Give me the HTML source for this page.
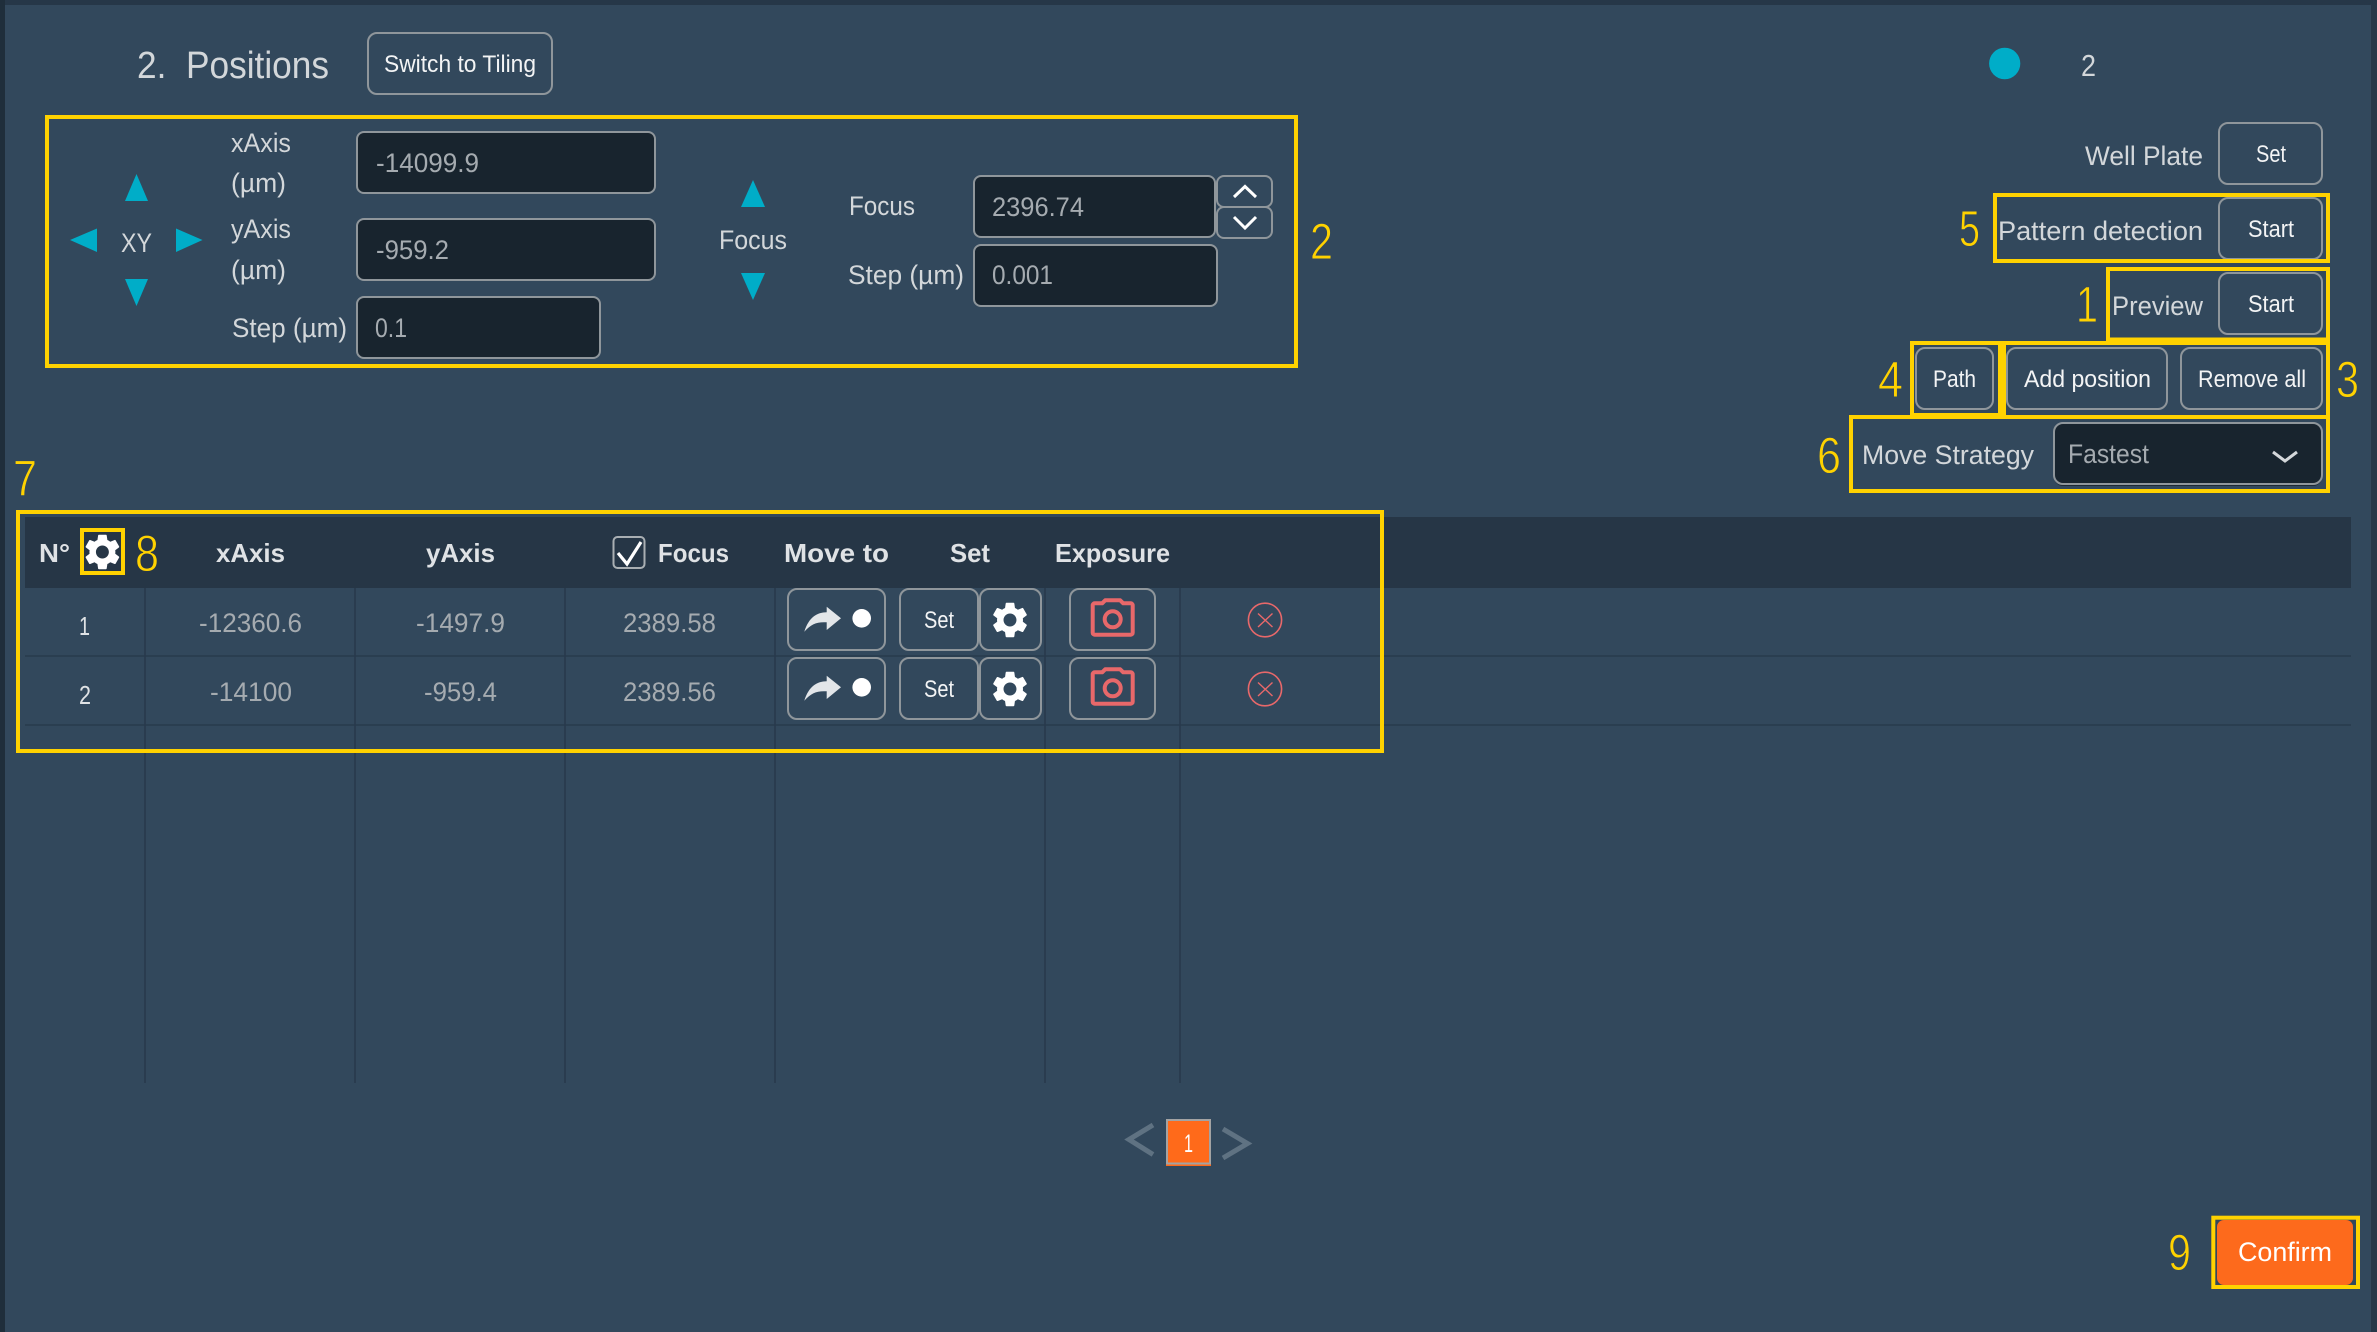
<!DOCTYPE html>
<html lang="en">
<head>
<meta charset="utf-8">
<title>Positions</title>
<style>
html,body{margin:0;padding:0;background:#32485c;width:2377px;height:1332px;overflow:hidden}
svg{display:block}
text{font-family:"Liberation Sans",sans-serif;font-size:27px;fill:#d3d7da;white-space:pre}
.v{fill:#a5abb0}
.b{fill:#f3f4f5;font-size:24px}
.h{font-weight:700;fill:#dfe2e5;font-size:26px}
.y{fill:#ffd200;font-size:51px;stroke:#32485c;stroke-width:.9px}
.box{fill:none;stroke:#ffd200;stroke-width:4}
.btn{fill:#32485c;stroke:#8f969b;stroke-width:2}
.inp{fill:#18242e;stroke:#8f969b;stroke-width:2}
.a{fill:#00adc8}
.cl{stroke:#283a4c;stroke-width:1.6}
.gear{fill:#fff;fill-rule:evenodd}
.cam{fill:none;stroke:#e8686a;stroke-width:4;stroke-linejoin:round}
</style>
</head>
<body>
<svg width="2377" height="1332" viewBox="0 0 2377 1332" xmlns="http://www.w3.org/2000/svg">
<defs>
<path id="g" d="M19.14 12.94c.04-.3.06-.61.06-.94 0-.32-.02-.64-.07-.94l2.03-1.58a.49.49 0 0 0 .12-.61l-1.92-3.32a.488.488 0 0 0-.59-.22l-2.39.96c-.5-.38-1.03-.7-1.62-.94l-.36-2.54a.484.484 0 0 0-.48-.41h-3.84c-.24 0-.43.17-.47.41l-.36 2.54c-.59.24-1.13.57-1.62.94l-2.39-.96c-.22-.08-.47 0-.59.22L2.74 8.87c-.12.21-.08.47.12.61l2.03 1.58c-.05.3-.09.63-.09.94s.02.64.07.94l-2.03 1.58a.49.49 0 0 0-.12.61l1.92 3.32c.12.22.37.29.59.22l2.39-.96c.5.38 1.03.7 1.62.94l.36 2.54c.05.24.24.41.48.41h3.84c.24 0 .44-.17.47-.41l.36-2.54c.59-.24 1.13-.56 1.62-.94l2.39.96c.22.08.47 0 .59-.22l1.92-3.32c.12-.22.07-.47-.12-.61l-2.01-1.58zM12 15.6c-1.98 0-3.6-1.62-3.6-3.6s1.62-3.6 3.6-3.6 3.6 1.62 3.6 3.6-1.62 3.6-3.6 3.6z"/>
</defs>

<!-- window -->
<rect width="2377" height="1332" fill="#32485c"/>
<rect x="0" y="0" width="2377" height="5" fill="#263748"/>
<rect x="0" y="0" width="5" height="1332" fill="#1f2e3b"/>
<rect x="2371" y="0" width="6" height="1332" fill="#263748"/>

<!-- title -->
<text x="137" y="78" style="font-size:38px;fill:#d3d7da" textLength="192" lengthAdjust="spacingAndGlyphs">2.  Positions</text>
<rect class="btn" x="368" y="33" width="184" height="61" rx="9"/>
<text class="b" x="384" y="72" textLength="152" lengthAdjust="spacingAndGlyphs">Switch to Tiling</text>

<!-- XY panel -->
<rect class="box" x="47" y="117" width="1249" height="249"/>
<polygon class="a" points="136.5,174 148,201 125,201"/>
<polygon class="a" points="70,240 97,228.5 97,252"/>
<polygon class="a" points="202.5,240 176,228.5 176,252"/>
<polygon class="a" points="136.5,306 148,279 125,279"/>
<text x="121" y="252" textLength="31" lengthAdjust="spacingAndGlyphs">XY</text>

<text x="231" y="152" textLength="60" lengthAdjust="spacingAndGlyphs">xAxis</text>
<text x="231" y="192" textLength="55" lengthAdjust="spacingAndGlyphs">(µm)</text>
<rect class="inp" x="357" y="132" width="298" height="61" rx="7"/>
<text class="v" x="376" y="172" textLength="103" lengthAdjust="spacingAndGlyphs">-14099.9</text>

<text x="231" y="238" textLength="60" lengthAdjust="spacingAndGlyphs">yAxis</text>
<text x="231" y="279" textLength="55" lengthAdjust="spacingAndGlyphs">(µm)</text>
<rect class="inp" x="357" y="219" width="298" height="61" rx="7"/>
<text class="v" x="376" y="259" textLength="73" lengthAdjust="spacingAndGlyphs">-959.2</text>

<text x="232" y="337" textLength="115" lengthAdjust="spacingAndGlyphs">Step (µm)</text>
<rect class="inp" x="357" y="297" width="243" height="61" rx="7"/>
<text class="v" x="375" y="337" textLength="32" lengthAdjust="spacingAndGlyphs">0.1</text>

<polygon class="a" points="753,180 765,207 741,207"/>
<text x="719" y="249" textLength="68" lengthAdjust="spacingAndGlyphs">Focus</text>
<polygon class="a" points="753,300 765,273 741,273"/>

<text x="849" y="215" textLength="66" lengthAdjust="spacingAndGlyphs">Focus</text>
<rect class="inp" x="974" y="176" width="241" height="61" rx="7"/>
<text class="v" x="992" y="216" textLength="92" lengthAdjust="spacingAndGlyphs">2396.74</text>
<rect class="btn" x="1217" y="176" width="55" height="31" rx="7"/>
<rect class="btn" x="1217" y="207" width="55" height="31" rx="7"/>
<path d="M1234 197L1245 186.5L1256 197" fill="none" stroke="#fff" stroke-width="3"/>
<path d="M1234 217L1245 228L1256 217" fill="none" stroke="#fff" stroke-width="3"/>
<text x="848" y="284" textLength="116" lengthAdjust="spacingAndGlyphs">Step (µm)</text>
<rect class="inp" x="974" y="245" width="243" height="61" rx="7"/>
<text class="v" x="992" y="284" textLength="61" lengthAdjust="spacingAndGlyphs">0.001</text>
<text class="y" x="1310" y="259" textLength="23" lengthAdjust="spacingAndGlyphs">2</text>

<!-- top right -->
<ellipse cx="2004.7" cy="63.5" rx="15.6" ry="15.8" fill="#00adc8"/>
<text x="2081" y="76" style="font-size:31px;fill:#d3d7da" textLength="15" lengthAdjust="spacingAndGlyphs">2</text>

<text x="2085" y="165" textLength="118" lengthAdjust="spacingAndGlyphs">Well Plate</text>
<rect class="btn" x="2219" y="123" width="103" height="61" rx="9"/>
<text class="b" x="2256" y="162" textLength="30" lengthAdjust="spacingAndGlyphs">Set</text>

<text x="1998" y="240" textLength="205" lengthAdjust="spacingAndGlyphs">Pattern detection</text>
<rect class="btn" x="2219" y="198" width="103" height="61" rx="9"/>
<text class="b" x="2248" y="237" textLength="46" lengthAdjust="spacingAndGlyphs">Start</text>

<text x="2112" y="315" textLength="91" lengthAdjust="spacingAndGlyphs">Preview</text>
<rect class="btn" x="2219" y="273" width="103" height="61" rx="9"/>
<text class="b" x="2248" y="312" textLength="46" lengthAdjust="spacingAndGlyphs">Start</text>

<rect class="btn" x="1916" y="348" width="77" height="61" rx="9"/>
<text class="b" x="1933" y="387" textLength="43" lengthAdjust="spacingAndGlyphs">Path</text>
<rect class="btn" x="2007" y="348" width="160" height="61" rx="9"/>
<text class="b" x="2024" y="387" textLength="127" lengthAdjust="spacingAndGlyphs">Add position</text>
<rect class="btn" x="2181" y="348" width="141" height="61" rx="9"/>
<text class="b" x="2198" y="387" textLength="108" lengthAdjust="spacingAndGlyphs">Remove all</text>

<text x="1862" y="464" textLength="172" lengthAdjust="spacingAndGlyphs">Move Strategy</text>
<rect x="2054" y="425" width="268" height="61" rx="9" fill="#1c2935"/>
<rect class="inp" x="2054" y="423" width="268" height="61" rx="9"/>
<text class="v" x="2068" y="463" textLength="81" lengthAdjust="spacingAndGlyphs">Fastest</text>
<path d="M2273 452L2285 461L2297 452" fill="none" stroke="#d3d7da" stroke-width="3"/>

<!-- yellow boxes right -->
<rect class="box" x="1995" y="195" width="333" height="66"/>
<rect class="box" x="2108" y="269" width="220" height="70.5"/>
<rect class="box" x="2004" y="343" width="324" height="74"/>
<rect class="box" x="1912" y="343" width="88" height="72"/>
<rect class="box" x="1851" y="417" width="477" height="74"/>
<text class="y" x="1959" y="246" textLength="21" lengthAdjust="spacingAndGlyphs">5</text>
<text class="y" x="2076" y="322" textLength="22" lengthAdjust="spacingAndGlyphs">1</text>
<text class="y" x="1878" y="397" textLength="25" lengthAdjust="spacingAndGlyphs">4</text>
<text class="y" x="2336" y="397" textLength="23" lengthAdjust="spacingAndGlyphs">3</text>
<text class="y" x="1817" y="473" textLength="24" lengthAdjust="spacingAndGlyphs">6</text>
<text class="y" x="13" y="496" textLength="24" lengthAdjust="spacingAndGlyphs">7</text>

<!-- table -->
<rect x="25" y="517" width="2326" height="71" fill="#263646"/>
<line class="cl" x1="145" y1="588" x2="145" y2="1083"/>
<line class="cl" x1="355" y1="588" x2="355" y2="1083"/>
<line class="cl" x1="565" y1="588" x2="565" y2="1083"/>
<line class="cl" x1="775" y1="588" x2="775" y2="1083"/>
<line class="cl" x1="1045" y1="588" x2="1045" y2="1083"/>
<line class="cl" x1="1180" y1="588" x2="1180" y2="1083"/>
<line class="cl" x1="25" y1="656" x2="2351" y2="656"/>
<line class="cl" x1="25" y1="725" x2="2351" y2="725"/>

<text class="h" x="39" y="562" textLength="31" lengthAdjust="spacingAndGlyphs">N°</text>
<use href="#g" class="gear" transform="translate(80.8 530.4) scale(1.8)"/>
<rect x="82" y="530" width="41" height="43" fill="none" stroke="#ffd200" stroke-width="4"/>
<text class="y" x="135" y="571" style="stroke:#263646;stroke-width:.9px" textLength="24" lengthAdjust="spacingAndGlyphs">8</text>
<text class="h" x="216" y="562" textLength="69" lengthAdjust="spacingAndGlyphs">xAxis</text>
<text class="h" x="426" y="562" textLength="69" lengthAdjust="spacingAndGlyphs">yAxis</text>
<rect x="613.5" y="537" width="31" height="31" rx="4" fill="none" stroke="#a9afb3" stroke-width="2"/>
<path d="M618 553L627 564L641 542" fill="none" stroke="#fff" stroke-width="3.2"/>
<text class="h" x="658" y="562" textLength="71" lengthAdjust="spacingAndGlyphs">Focus</text>
<text class="h" x="784" y="562" textLength="105" lengthAdjust="spacingAndGlyphs">Move to</text>
<text class="h" x="950" y="562" textLength="40" lengthAdjust="spacingAndGlyphs">Set</text>
<text class="h" x="1055" y="562" textLength="115" lengthAdjust="spacingAndGlyphs">Exposure</text>

<!-- row 1 -->
<text x="79" y="635" style="font-size:26px;fill:#dfe2e5" textLength="11" lengthAdjust="spacingAndGlyphs">1</text>
<text class="v" x="199" y="632" textLength="103" lengthAdjust="spacingAndGlyphs">-12360.6</text>
<text class="v" x="416" y="632" textLength="89" lengthAdjust="spacingAndGlyphs">-1497.9</text>
<text class="v" x="623" y="632" textLength="93" lengthAdjust="spacingAndGlyphs">2389.58</text>
<g>
<rect class="btn" x="788" y="589" width="97" height="61" rx="9"/>
<path d="M804.3 631.7C809 617 817 612.5 826.7 612.3V606.7L841 618.3L826.7 630V622.3C817 621.7 811 624 804.3 631.7Z" fill="#e3e6e9"/>
<circle cx="861.7" cy="618.3" r="9.3" fill="#fff"/>
<rect class="btn" x="900" y="589" width="78" height="61" rx="9"/>
<text class="b" x="924" y="628" textLength="30" lengthAdjust="spacingAndGlyphs">Set</text>
<rect class="btn" x="980" y="589" width="61" height="61" rx="9"/>
<use href="#g" class="gear" transform="translate(988.4 598.4) scale(1.8)"/>
<rect class="btn" x="1070" y="589" width="85" height="61" rx="9"/>
<path class="cam" d="M1092.7 605.3a2 2 0 0 1 2-2h7.5l3-3h15l3 3h7.5a2 2 0 0 1 2 2v27.4a2 2 0 0 1-2 2h-36a2 2 0 0 1-2-2z"/>
<circle class="cam" cx="1112.7" cy="619.3" r="8"/>
<ellipse cx="1265" cy="620" rx="16.6" ry="16.8" fill="none" stroke="#e8686a" stroke-width="1.6"/>
<path d="M1258 613.5L1272.5 627M1272.5 613.5L1258 627" stroke="#e8686a" stroke-width="1.4" fill="none"/>
</g>

<!-- row 2 -->
<text x="79" y="704" style="font-size:26px;fill:#dfe2e5" textLength="12" lengthAdjust="spacingAndGlyphs">2</text>
<text class="v" x="210" y="701" textLength="82" lengthAdjust="spacingAndGlyphs">-14100</text>
<text class="v" x="424" y="701" textLength="73" lengthAdjust="spacingAndGlyphs">-959.4</text>
<text class="v" x="623" y="701" textLength="93" lengthAdjust="spacingAndGlyphs">2389.56</text>
<g transform="translate(0 69)">
<rect class="btn" x="788" y="589" width="97" height="61" rx="9"/>
<path d="M804.3 631.7C809 617 817 612.5 826.7 612.3V606.7L841 618.3L826.7 630V622.3C817 621.7 811 624 804.3 631.7Z" fill="#e3e6e9"/>
<circle cx="861.7" cy="618.3" r="9.3" fill="#fff"/>
<rect class="btn" x="900" y="589" width="78" height="61" rx="9"/>
<text class="b" x="924" y="628" textLength="30" lengthAdjust="spacingAndGlyphs">Set</text>
<rect class="btn" x="980" y="589" width="61" height="61" rx="9"/>
<use href="#g" class="gear" transform="translate(988.4 598.4) scale(1.8)"/>
<rect class="btn" x="1070" y="589" width="85" height="61" rx="9"/>
<path class="cam" d="M1092.7 605.3a2 2 0 0 1 2-2h7.5l3-3h15l3 3h7.5a2 2 0 0 1 2 2v27.4a2 2 0 0 1-2 2h-36a2 2 0 0 1-2-2z"/>
<circle class="cam" cx="1112.7" cy="619.3" r="8"/>
<ellipse cx="1265" cy="620" rx="16.6" ry="16.8" fill="none" stroke="#e8686a" stroke-width="1.6"/>
<path d="M1258 613.5L1272.5 627M1272.5 613.5L1258 627" stroke="#e8686a" stroke-width="1.4" fill="none"/>
</g>

<rect class="box" x="18" y="512" width="1364" height="239"/>

<!-- pagination -->
<path d="M1153 1125L1129 1139.5L1153 1154.5" fill="none" stroke="#5f7282" stroke-width="5"/>
<rect x="1166" y="1119" width="45" height="47" fill="#ff6a1a"/>
<rect x="1167" y="1120" width="43" height="43.5" fill="#ff6a1a" stroke="#a3a3a3" stroke-width="2"/>
<text x="1184" y="1152" style="font-size:25px;fill:#fff" textLength="9" lengthAdjust="spacingAndGlyphs">1</text>
<path d="M1223 1129L1247.5 1143.5L1223 1158" fill="none" stroke="#5f7282" stroke-width="5"/>

<!-- confirm -->
<rect x="2217" y="1220" width="136" height="65" rx="7" fill="#fd6a1c"/>
<rect class="box" x="2213.3" y="1217.7" width="144.7" height="69.3"/>
<text x="2238" y="1261" style="font-size:27px;fill:#fff" textLength="94" lengthAdjust="spacingAndGlyphs">Confirm</text>
<text class="y" x="2168" y="1270" textLength="23" lengthAdjust="spacingAndGlyphs">9</text>
</svg>
</body>
</html>
